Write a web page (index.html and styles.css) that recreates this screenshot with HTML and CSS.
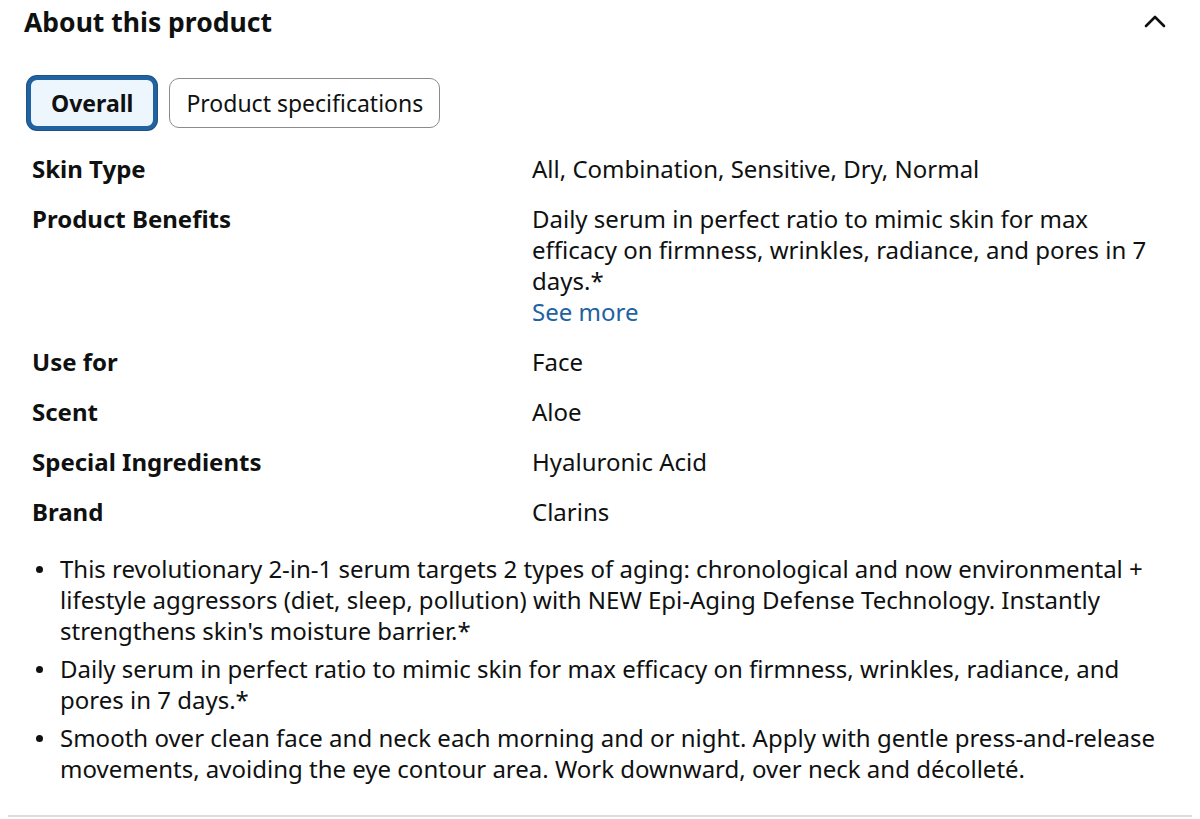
FILE: index.html
```html
<!DOCTYPE html>
<html lang="en">
<head>
  <meta charset="UTF-8" />
  <title>About this product</title>
  <link rel="stylesheet" href="styles.css">
</head>
<body>
  <div class="section">
    <div class="section-header">
      <h2 class="section-title">About this product</h2>
      <svg class="chevron" width="24" height="24" viewBox="0 0 24 24">
        <path d="M3 16 L12 7 L21 16" fill="none" stroke="#0f1111" stroke-width="2.6" stroke-linecap="round" stroke-linejoin="round"/>
      </svg>
    </div>

    <div class="tabs">
      <button class="tab tab-active">Overall</button>
      <button class="tab">Product specifications</button>
    </div>

    <div class="spec-table">
      <div class="spec-row">
        <div class="spec-label">Skin Type</div>
        <div class="spec-value">All, Combination, Sensitive, Dry, Normal</div>
      </div>
      <div class="spec-row">
        <div class="spec-label">Product Benefits</div>
        <div class="spec-value">
          Daily serum in perfect ratio to mimic skin for max efficacy on firmness, wrinkles, radiance, and pores in 7 days.*
          <a class="see-more" href="#">See more</a>
        </div>
      </div>
      <div class="spec-row">
        <div class="spec-label">Use for</div>
        <div class="spec-value">Face</div>
      </div>
      <div class="spec-row">
        <div class="spec-label">Scent</div>
        <div class="spec-value">Aloe</div>
      </div>
      <div class="spec-row">
        <div class="spec-label">Special Ingredients</div>
        <div class="spec-value">Hyaluronic Acid</div>
      </div>
      <div class="spec-row">
        <div class="spec-label">Brand</div>
        <div class="spec-value">Clarins</div>
      </div>
    </div>

    <ul class="bullets">
      <li>This revolutionary 2-in-1 serum targets 2 types of aging: chronological and now environmental + lifestyle aggressors (diet, sleep, pollution) with NEW Epi-Aging Defense Technology. Instantly strengthens skin's moisture barrier.*</li>
      <li>Daily serum in perfect ratio to mimic skin for max efficacy on firmness, wrinkles, radiance, and pores in 7 days.*</li>
      <li>Smooth over clean face and neck each morning and or night. Apply with gentle press-and-release movements, avoiding the eye contour area. Work downward, over neck and décolleté.</li>
    </ul>
  </div>
</body>
</html>
```

FILE: styles.css
```css
* {
  box-sizing: border-box;
  margin: 0;
  padding: 0;
}

body {
  font-family: 'Noto Sans', 'Open Sans', sans-serif;
  background: #fff;
  color: #0f1111;
  font-size: 24px;
  line-height: 31px;
}

.section {
  margin: 0 8px;
  padding: 4px 16px 24px;
  border-bottom: 2px solid #dddddd;
}

.section-header {
  display: flex;
  justify-content: space-between;
  align-items: center;
}

.section-title {
  font-size: 26.5px;
  font-weight: 700;
  line-height: 36px;
}

.chevron {
  margin-right: 9px;
}

.tabs {
  display: flex;
  align-items: center;
  gap: 12px;
  margin-top: 36px;
  padding-left: 3px;
}

.tab {
  font-family: inherit;
  font-size: 23px;
  color: #0f1111;
  background: #fff;
  border: 1px solid #888c8c;
  border-radius: 10px;
  height: 50px;
  padding: 0 16px;
  cursor: pointer;
}

.tab-active {
  font-weight: 700;
  background: #edf6fd;
  border: 4px solid #2162a1;
  height: 54px;
  padding: 0 20px;
  box-shadow: 0 0 0 1px #1c5486;
}

.spec-table {
  padding: 0 8px;
  margin-top: 23px;
}

.spec-row {
  display: flex;
  padding-bottom: 19px;
}

.spec-label {
  width: 500px;
  font-weight: 700;
}

.spec-value {
  flex: 1;
  padding-right: 20px;
}

.see-more {
  display: block;
  color: #2162a1;
  text-decoration: none;
}

.bullets {
  list-style: none;
  margin-top: 7px;
  padding-left: 36px;
}

.bullets li {
  position: relative;
  margin-bottom: 7px;
}

.bullets li::before {
  content: "";
  position: absolute;
  left: -24px;
  top: 13px;
  width: 7px;
  height: 7px;
  border-radius: 50%;
  background: #0f1111;
}
```
